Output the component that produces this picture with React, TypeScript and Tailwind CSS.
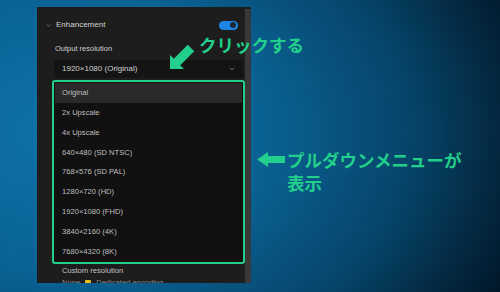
import { ChevronDown } from 'lucide-react';

const options = [
  'Original',
  '2x Upscale',
  '4x Upscale',
  '640×480 (SD NTSC)',
  '768×576 (SD PAL)',
  '1280×720 (HD)',
  '1920×1080 (FHD)',
  '3840×2160 (4K)',
  '7680×4320 (8K)',
];

const Toggle = () => (
  <div className="w-[19px] h-[9px] rounded-full bg-[#1f86e6] flex items-center justify-end pr-[2px]">
    <div className="w-[6px] h-[6px] rounded-full bg-[#1b2633]" />
  </div>
);

const App = () => {
  return (
    <div
      className="relative w-[500px] h-[292px] overflow-hidden pl-[37px] pt-[7px] font-['Liberation_Sans',sans-serif]"
      style={{
        background:
          'radial-gradient(ellipse 115% 140% at 12% 45%, #0e72a8 0%, #0a6294 35%, #06466b 60%, #02182a 85%, #00060b 100%)',
      }}
    >
      {/* settings panel */}
      <div className="w-[214px] h-[276px] bg-[#1d1d1d] flex overflow-hidden">
        <div className="flex-1 pt-[10px]">
          {/* header */}
          <div className="h-[16px] flex items-center pl-[8px] pr-[7px]">
            <ChevronDown size={7} strokeWidth={2} className="text-[#8e8e8e]" />
            <span className="ml-[4px] text-[8px] text-[#d2d2d2] leading-none">Enhancement</span>
            <div className="ml-auto">
              <Toggle />
            </div>
          </div>

          <div className="pl-[17px] pr-[2px]">
            <div className="mt-[10px] h-[12px] flex items-center text-[7.5px] text-[#cdcdcd] pl-[1px]">
              Output resolution
            </div>

            {/* select */}
            <div className="mt-[5px] h-[18px] bg-[#141414] flex items-center pl-[8px] pr-[7px] text-[8px] text-[#d0d0d0]">
              <span>1920×1080 (Original)</span>
              <ChevronDown size={8} strokeWidth={2} className="ml-auto text-[#9a9a9a]" />
            </div>

            {/* dropdown */}
            <div className="mt-[2px] -mx-[2px] border-2 border-[#22cf8c] rounded-[3px] bg-[#111111] p-[1px]">
              {options.map((opt, i) => (
                <div
                  key={opt}
                  className={`h-[19.8px] flex items-center pl-[7px] text-[7.6px] text-[#bfbfbf] ${
                    i === 0 ? 'bg-[#2a2a2a]' : ''
                  }`}
                >
                  {opt}
                </div>
              ))}
            </div>

            <div className="mt-[1px] h-[12px] flex items-center pl-[8px] text-[7.6px] text-[#c4c4c4]">
              Custom resolution
            </div>
            <div className="h-[12px] flex items-center pl-[8px] text-[7.6px] text-[#8a8a8a] gap-[5px]">
              <span>None</span>
              <span className="w-[6px] h-[6px] rounded-[1px] bg-[#e8c21a]" />
              <span>Dedicated encoding</span>
            </div>
          </div>
        </div>
        {/* scrollbar */}
        <div className="w-[6px] mt-[2px] bg-[#393939]" />
      </div>

      {/* annotation: click */}
      <svg className="absolute left-[168px] top-[42px]" width="28" height="30" viewBox="0 0 28 30">
        <polygon
          points="2,27 16,27 12.2,23.2 26.2,9.2 19.8,2.8 5.8,16.8 2,13"
          fill="#22cf8c"
        />
      </svg>
      <div className="absolute left-[199px] top-[36px] text-[17.5px] leading-none font-bold text-[#22cf8c] font-['Noto_Sans_CJK_JP',sans-serif]">
        クリックする
      </div>

      {/* annotation: dropdown */}
      <svg className="absolute left-[257px] top-[152px]" width="29" height="16" viewBox="0 0 29 16">
        <polygon points="0,7.5 11,0 11,4 28,4 28,11 11,11 11,15" fill="#22cf8c" />
      </svg>
      <div className="absolute left-[287px] top-[148px] text-[17.5px] leading-[23px] font-bold text-[#22cf8c] font-['Noto_Sans_CJK_JP',sans-serif]">
        プルダウンメニューが
        <br />
        表示
      </div>
    </div>
  );
};

export default App;
